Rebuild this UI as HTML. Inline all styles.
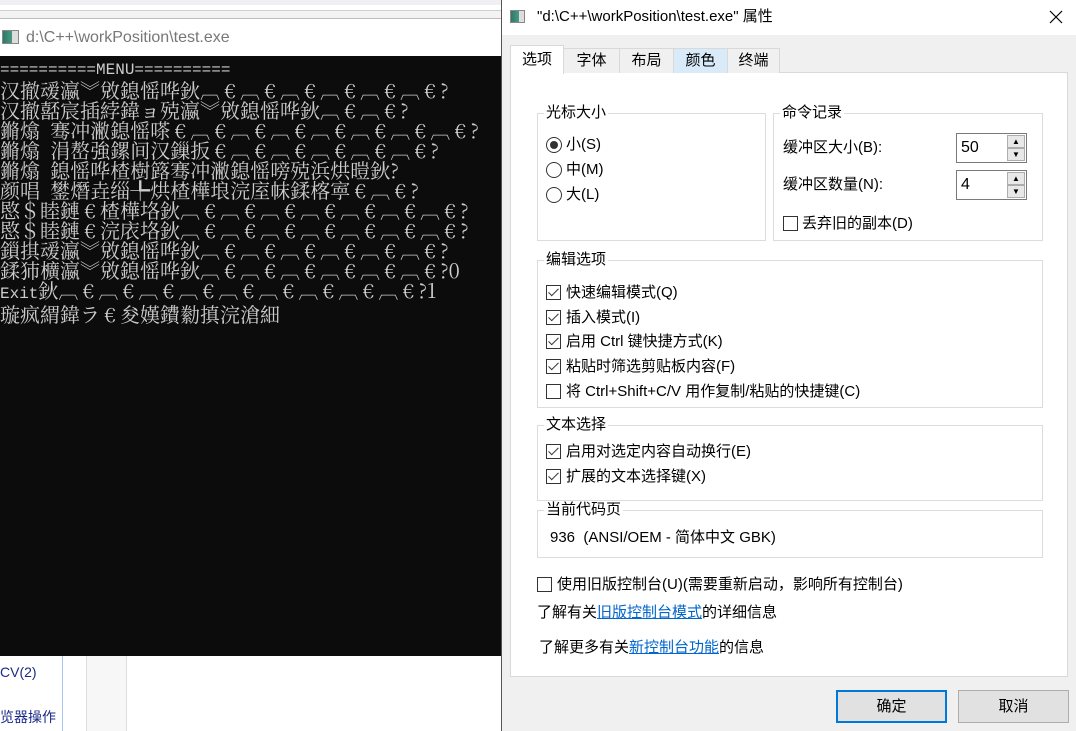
<!DOCTYPE html>
<html><head><meta charset="utf-8"><style>
*{margin:0;padding:0;box-sizing:border-box}
body{width:1076px;height:731px;position:relative;overflow:hidden;background:#fff;font-family:"Liberation Sans","Noto Sans CJK SC",sans-serif;font-size:15px;color:#000}
.a{position:absolute}
.con{left:0;top:56px;width:501px;height:600px;background:#0c0c0c;color:#cccccc;font-family:"Noto Serif CJK SC","Liberation Serif",serif;font-size:20px;line-height:20px;white-space:pre;overflow:hidden;padding-top:0}
.con i{display:inline-block;width:20px;font-style:normal;text-align:center}
.con s{text-decoration:none;font-family:"Liberation Mono",monospace;font-size:16px}
.t{position:absolute;white-space:nowrap;line-height:18px}
.grp{position:absolute;border:1px solid #dcdcdc}
.gl{position:absolute;background:#fff;padding:0 2px;line-height:18px;top:-10px;left:6px}
.cb{position:absolute;width:15px;height:15px;border:1px solid #333;background:#fff}
.cb.c::after{content:"";position:absolute;left:4px;top:0px;width:4px;height:9px;border:solid #333;border-width:0 1.5px 1.5px 0;transform:rotate(45deg)}
.rd{position:absolute;width:16px;height:16px;border:1px solid #333;border-radius:50%;background:#fff}
.rd.c::after{content:"";position:absolute;left:3px;top:3px;width:8px;height:8px;border-radius:50%;background:#333}
.tab{position:absolute;top:48px;height:25px;border:1px solid #d9d9d9;border-bottom:none;background:#f0f0f0;text-align:center;line-height:24px}
a{color:#0066cc;text-decoration:underline}
.spin{position:absolute;width:71px;height:30px;border:1px solid #7a7a7a;background:#fff}
.sb{position:absolute;right:1px;width:18px;height:13px;border:1px solid #adadad;background:#e8e8e8;font-size:8px;text-align:center;line-height:11px}
.btn{position:absolute;top:690px;height:33px;width:111px;background:#e1e1e1;border:1px solid #adadad;text-align:center;line-height:31px}
</style></head><body>
<div class="a" style="left:0;top:0;width:501px;height:5px;background:#f0f0f2"></div>
<div class="a" style="left:0;top:10px;width:501px;height:1px;background:#cfcfcf"></div>
<div class="a" style="left:0;top:11px;width:501px;height:7px;background:#f3f3f3"></div>
<div class="a" style="left:0;top:18px;width:501px;height:1px;background:#bdbdbd"></div>
<div class="a" style="left:2px;top:30px;width:17px;height:14px;border:1px solid #888;background:linear-gradient(90deg,#2a7a6a 0,#4a9a80 60%,#ddd 60%)"></div>
<div class="t" style="left:26px;top:29px;font-size:16px;color:#777">d:\C++\workPosition\test.exe</div>
<div class="a con"><s>==========MENU==========</s>
汉撤叆瀛︾敓鎴愮哗鈥︹<i>€</i>︹<i>€</i>︹<i>€</i>︹<i>€</i>︹<i>€</i>︹<i>€</i>?
汉撤嚭宸插綍鍏ョ殑瀛︾敓鎴愮哗鈥︹<i>€</i>︹<i>€</i>?
鏅熻  骞冲潎鎴愮嗏<i>€</i>︹<i>€</i>︹<i>€</i>︹<i>€</i>︹<i>€</i>︹<i>€</i>︹<i>€</i>︹<i>€</i>?
鏅熻  涓嶅強鏍间汉鏁扳<i>€</i>︹<i>€</i>︹<i>€</i>︹<i>€</i>︹<i>€</i>︹<i>€</i>?
鏅熻  鎴愮哗楂樹簬骞冲潎鎴愮嗙殑浜烘暟鈥?
颜唱  鐢熸垚缁╄烘楂樺埌浣庢帓鍒楁寕<i>€</i>︹<i>€</i>?
愍＄睦鏈<i>€</i>楂樺垎鈥︹<i>€</i>︹<i>€</i>︹<i>€</i>︹<i>€</i>︹<i>€</i>︹<i>€</i>︹<i>€</i>?
愍＄睦鏈<i>€</i>浣庡垎鈥︹<i>€</i>︹<i>€</i>︹<i>€</i>︹<i>€</i>︹<i>€</i>︹<i>€</i>︹<i>€</i>?
鎻掑叆瀛︾敓鎴愮哗鈥︹<i>€</i>︹<i>€</i>︹<i>€</i>︹<i>€</i>︹<i>€</i>︹<i>€</i>?
鍒犻櫎瀛︾敓鎴愮哗鈥︹<i>€</i>︹<i>€</i>︹<i>€</i>︹<i>€</i>︹<i>€</i>︹<i>€</i>?0
<s>Exit</s>鈥︹<i>€</i>︹<i>€</i>︹<i>€</i>︹<i>€</i>︹<i>€</i>︹<i>€</i>︹<i>€</i>︹<i>€</i>︹<i>€</i>?1
璇疯緭鍏ラ<i>€</i>夋嫨鐨勬搷浣滄細</div>
<div class="a" style="left:62px;top:656px;width:1px;height:75px;background:#a8c4ec"></div>
<div class="a" style="left:86px;top:656px;width:41px;height:75px;background:#f7f7f7;border-left:1px solid #ddd;border-right:1px solid #ddd"></div>
<div class="t" style="left:0;top:663px;color:#1a2a8a;font-size:14px">CV(2)</div>
<div class="t" style="left:0;top:708px;color:#1a2a8a;font-size:14px">览器操作</div>

<div class="a" style="left:501px;top:0;width:575px;height:731px;background:#f0f0f0;border-left:1px solid #555"></div>
<div class="a" style="left:502px;top:0;width:574px;height:35px;background:#fff"></div>
<div class="a" style="left:510px;top:10px;width:15px;height:13px;border:1px solid #888;background:linear-gradient(90deg,#2a7a6a 0,#4a9a80 60%,#ddd 60%)"></div>
<div class="t" style="left:537px;top:8px;font-size:15px">"d:\C++\workPosition\test.exe" 属性</div>
<svg class="a" style="left:1049px;top:10px" width="14" height="14"><path d="M1 1L13 13M13 1L1 13" stroke="#000" stroke-width="1.2"/></svg>

<div class="a" style="left:510px;top:72px;width:558px;height:605px;background:#fff;border:1px solid #d9d9d9"></div>
<div class="tab" style="left:563px;width:57px">字体</div>
<div class="tab" style="left:619px;width:55px">布局</div>
<div class="tab" style="left:673px;width:55px;background:#d9ebf9">颜色</div>
<div class="tab" style="left:727px;width:53px">终端</div>
<div class="tab" style="left:510px;top:45px;width:54px;height:29px;background:#fff;line-height:28px">选项</div>

<div class="grp" style="left:537px;top:113px;width:229px;height:128px"><span class="gl">光标大小</span></div>
<div class="rd c" style="left:546px;top:137px"></div><div class="t" style="left:566px;top:136px">小(S)</div>
<div class="rd" style="left:546px;top:162px"></div><div class="t" style="left:566px;top:161px">中(M)</div>
<div class="rd" style="left:546px;top:187px"></div><div class="t" style="left:566px;top:186px">大(L)</div>

<div class="grp" style="left:773px;top:113px;width:270px;height:128px"><span class="gl">命令记录</span></div>
<div class="t" style="left:783px;top:139px">缓冲区大小(B):</div>
<div class="spin" style="left:956px;top:133px"><span class="t" style="left:4px;top:5px;font-size:16px">50</span><div class="sb" style="top:1px">▲</div><div class="sb" style="top:14px">▼</div></div>
<div class="t" style="left:783px;top:176px">缓冲区数量(N):</div>
<div class="spin" style="left:956px;top:170px"><span class="t" style="left:4px;top:5px;font-size:16px">4</span><div class="sb" style="top:1px">▲</div><div class="sb" style="top:14px">▼</div></div>
<div class="cb" style="left:783px;top:216px"></div><div class="t" style="left:802px;top:215px">丢弃旧的副本(D)</div>

<div class="grp" style="left:537px;top:260px;width:506px;height:148px"><span class="gl">编辑选项</span></div>
<div class="cb c" style="left:546px;top:285px"></div><div class="t" style="left:566px;top:284px">快速编辑模式(Q)</div>
<div class="cb c" style="left:546px;top:310px"></div><div class="t" style="left:566px;top:309px">插入模式(I)</div>
<div class="cb c" style="left:546px;top:334px"></div><div class="t" style="left:566px;top:333px">启用 Ctrl 键快捷方式(K)</div>
<div class="cb c" style="left:546px;top:359px"></div><div class="t" style="left:566px;top:358px">粘贴时筛选剪贴板内容(F)</div>
<div class="cb" style="left:546px;top:384px"></div><div class="t" style="left:566px;top:383px">将 Ctrl+Shift+C/V 用作复制/粘贴的快捷键(C)</div>

<div class="grp" style="left:537px;top:425px;width:506px;height:76px"><span class="gl">文本选择</span></div>
<div class="cb c" style="left:546px;top:444px"></div><div class="t" style="left:566px;top:443px">启用对选定内容自动换行(E)</div>
<div class="cb c" style="left:546px;top:469px"></div><div class="t" style="left:566px;top:468px">扩展的文本选择键(X)</div>

<div class="grp" style="left:537px;top:510px;width:506px;height:48px"><span class="gl">当前代码页</span></div>
<div class="t" style="left:550px;top:529px">936 &nbsp;(ANSI/OEM - 简体中文 GBK)</div>

<div class="cb" style="left:537px;top:577px"></div><div class="t" style="left:557px;top:576px">使用旧版控制台(U)(需要重新启动，影响所有控制台)</div>
<div class="t" style="left:537px;top:604px">了解有关<a>旧版控制台模式</a>的详细信息</div>
<div class="t" style="left:539px;top:639px">了解更多有关<a>新控制台功能</a>的信息</div>

<div class="btn" style="left:836px;border:2px solid #0078d7;line-height:29px">确定</div>
<div class="btn" style="left:958px">取消</div>
</body></html>
